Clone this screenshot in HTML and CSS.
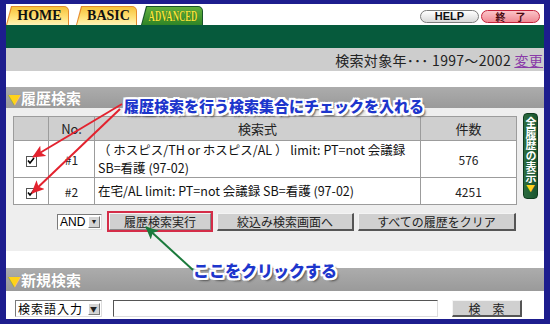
FILE: index.html
```html
<!DOCTYPE html>
<html lang="ja">
<head>
<meta charset="utf-8">
<title>履歴検索</title>
<link rel="stylesheet" href="styles.css">
</head>
<body>
<div class="frame">
  <div class="topbar">
    <div class="tabs">
      <div class="tab tab-y tab-home"><span class="tab-in">HOME</span></div>
      <div class="tab tab-y tab-basic"><span class="tab-in">BASIC</span></div>
      <div class="tab tab-g"><span class="tab-in"><span class="adv">ADVANCED</span></span></div>
    </div>
    <div class="tools">
      <span class="pill pill-help">HELP</span>
      <span class="pill pill-end">終　了</span>
    </div>
  </div>
  <div class="greenbar"></div>
  <div class="infobar">検索対象年･･･ 1997〜2002 <a class="chg">変更</a></div>

  <div class="sechead"><span class="tri">▼</span>履歴検索</div>
  <div class="panel">
    <div class="panel-top">
      <table class="hist">
        <colgroup><col class="c1"><col class="c2"><col class="c3"><col class="c4"></colgroup>
        <tr class="hrow"><th></th><th>No.</th><th>検索式</th><th>件数</th></tr>
        <tr class="r1">
          <td class="cc"><span class="cb"><svg width="8" height="8" viewBox="0 0 8 8"><path d="M1 3.5 L3 6 L7 1" fill="none" stroke="#000" stroke-width="1.6"/></svg></span></td>
          <td class="cc">#1</td>
          <td class="q">（ ホスピス/TH or ホスピス/AL ） limit: PT=not 会議録<br>SB=看護 (97-02)</td>
          <td class="cc">576</td>
        </tr>
        <tr class="r2">
          <td class="cc"><span class="cb"><svg width="8" height="8" viewBox="0 0 8 8"><path d="M1 3.5 L3 6 L7 1" fill="none" stroke="#000" stroke-width="1.6"/></svg></span></td>
          <td class="cc">#2</td>
          <td class="q">在宅/AL limit: PT=not 会議録 SB=看護 (97-02)</td>
          <td class="cc">4251</td>
        </tr>
      </table>
      <div class="allhist"><span class="vt">全履歴の表示</span><span class="vtri">▼</span></div>
    </div>
    <div class="btnrow">
      <span class="sel sel-and"><span class="sel-val">AND</span><span class="sel-arr">▼</span></span>
      <span class="hl"><span class="btn btn-run">履歴検索実行</span></span>
      <span class="btn btn-narrow">絞込み検索画面へ</span>
      <span class="btn btn-clear">すべての履歴をクリア</span>
    </div>
  </div>

  <div class="sechead sechead2"><span class="tri">▼</span>新規検索</div>
  <div class="newrow">
    <span class="sel sel-term"><span class="sel-val">検索語入力</span><span class="sel-arr">▼</span></span>
    <span class="textbox"></span>
    <span class="btn btn-search">検　索</span>
  </div>
</div>

<svg class="arrows" width="550" height="324" viewBox="0 0 550 324">
  <defs>
    <marker id="hr" markerUnits="userSpaceOnUse" markerWidth="14" markerHeight="12" refX="12" refY="6" orient="auto">
      <path d="M0 0 L13 6 L0 12 L3 6 Z" fill="#e3222e"/>
    </marker>
    <marker id="hg" markerUnits="userSpaceOnUse" markerWidth="14" markerHeight="12" refX="12" refY="6" orient="auto">
      <path d="M0 0 L13 6 L0 12 L3 6 Z" fill="#1b7a3c"/>
    </marker>
  </defs>
  <line x1="122" y1="104" x2="33" y2="157" stroke="#e3222e" stroke-width="2" marker-end="url(#hr)"/>
  <line x1="120" y1="109" x2="32" y2="193" stroke="#e3222e" stroke-width="2" marker-end="url(#hr)"/>
  <line x1="193" y1="270" x2="146" y2="227" stroke="#1b7a3c" stroke-width="2" marker-end="url(#hg)"/>
</svg>
<div class="callout callout-1">履歴検索を行う検索集合にチェックを入れる</div>
<div class="callout callout-2">ここをクリックする</div>
</body>
</html>
```
FILE: styles.css
```css
html, body {
  margin: 0;
  padding: 0;
}
body {
  width: 550px;
  height: 324px;
  background: #1d1d8e;
  position: relative;
  overflow: hidden;
  font-family: "Noto Sans CJK JP", "Noto Sans", sans-serif;
  color: #000;
}
.frame {
  margin: 4px 6px 0 6px;
  height: 315px;
  background: #fff;
  display: flex;
  flex-direction: column;
}
/* top bar */
.topbar {
  height: 21px;
  display: flex;
  justify-content: space-between;
}
.tabs {
  display: flex;
  align-items: flex-end;
  gap: 7px;
}
.tab {
  height: 19px;
  padding: 1px 1px 0 1px;
  box-sizing: border-box;
  clip-path: polygon(5px 0, 100% 0, 100% 100%, 0 100%);
  border-radius: 4px 5px 0 0;
  display: flex;
}
.tab-home { width: 63px; }
.tab-basic { width: 61px; }
.tab-g { width: 62px; margin-left: -3px; background: #17542a; }
.tab-y { background: #e58a2c; }
.tab-in {
  flex: 1;
  display: flex;
  align-items: center;
  justify-content: center;
  clip-path: polygon(5px 0, 100% 0, 100% 100%, 0 100%);
  border-radius: 3px 4px 0 0;
  padding-left: 4px;
  overflow: hidden;
}
.tab-y .tab-in {
  background: linear-gradient(#f7c23a, #ffe27a 60%, #fff3b8);
  font-family: "Liberation Serif", serif;
  font-weight: bold;
  font-size: 14px;
  color: #111;
}
.tab-g .tab-in {
  background: linear-gradient(#62b03e, #2f8526);
  padding-left: 2px;
}
.adv {
  font-family: "Liberation Serif", serif;
  font-weight: bold;
  font-size: 15px;
  line-height: 15px;
  color: #f4e43c;
  text-shadow: 0 0 1px #1a4a10;
  transform: scaleX(0.58);
  display: inline-block;
  margin: 0 -25px;
  flex: none;
}
.tools {
  display: flex;
  gap: 2px;
  margin-top: 6px;
  padding-right: 4px;
  height: 13px;
}
.pill {
  width: 59px;
  height: 13px;
  box-sizing: border-box;
  border-radius: 7px;
  display: flex;
  align-items: center;
  justify-content: center;
  font-size: 11px;
  font-weight: bold;
  line-height: 1;
}
.pill-help {
  border: 1px solid #7c7c7c;
  background: linear-gradient(#ffffff, #d8d8d8);
  font-family: "Liberation Sans", sans-serif;
  color: #111;
}
.pill-end {
  border: 1px solid #c4223a;
  background: linear-gradient(#fbc4c8, #f08a94);
  color: #4a0a10;
  font-size: 10px;
}
.greenbar {
  height: 23px;
  background: #065a3c;
}
.infobar {
  height: 23px;
  background: #cdcdcd;
  display: flex;
  align-items: center;
  justify-content: flex-end;
  padding-right: 1px;
  font-size: 14px;
  letter-spacing: 0.3px;
  color: #222;
  white-space: pre;
}
.chg {
  color: #8a3aa8;
  text-decoration: underline;
}
/* section headers */
.sechead {
  margin-top: 16px;
  height: 21px;
  background: linear-gradient(#acacac, #9a9a9a);
  color: #fff;
  font-weight: bold;
  font-size: 15px;
  line-height: 21px;
  padding-left: 2px;
  text-shadow: 0 0 1px #888;
}
.tri {
  color: #ffd21a;
  font-size: 13px;
}
.sechead2 {
  margin-top: 17px;
  height: 23px;
  line-height: 23px;
}
/* panel */
.panel {
  background: #eeeeee;
  height: 143px;
  box-sizing: border-box;
  padding: 5px 0 0 7px;
}
.panel-top {
  display: flex;
  align-items: flex-start;
  gap: 6px;
}
.hist {
  margin-top: 3px;
  border-collapse: collapse;
  table-layout: fixed;
  width: 503px;
  font-size: 12.5px;
  background: #fff;
}
.c1 { width: 35px; }
.c2 { width: 46px; }
.c3 { width: 326px; }
.c4 { width: 96px; }
.hist th, .hist td {
  border: 1px solid #9c9c9c;
  padding: 0;
}
.hist th {
  background: #cfcfcf;
  font-weight: normal;
  font-size: 13px;
  color: #222;
  height: 23px;
}
.r1 td { height: 36px; }
.r2 td { height: 26px; }
.cc { text-align: center; color: #222; font-size: 12px; }
.q {
  padding: 0 0 0 3px !important;
  line-height: 18px;
  color: #111;
  white-space: nowrap;
}
.cb {
  display: inline-flex;
  align-items: center;
  justify-content: center;
  width: 9px;
  height: 9px;
  border: 1px solid #555;
  background: #fff;
  vertical-align: middle;
}
.allhist {
  width: 15px;
  height: 86px;
  box-sizing: border-box;
  border-radius: 4px;
  background: linear-gradient(90deg, #2b6b3e, #1a5530);
  border: 1px solid #0f3a1e;
  display: flex;
  flex-direction: column;
  align-items: center;
  padding-top: 3px;
}
.vt {
  writing-mode: vertical-rl;
  text-orientation: upright;
  font-size: 11px;
  font-weight: bold;
  color: #fff;
  line-height: 13px;
}
.vtri {
  color: #ffd21a;
  font-size: 9px;
  line-height: 10px;
  margin-top: 1px;
}
.btnrow {
  margin-top: 6px;
  padding-left: 44px;
  display: flex;
  align-items: center;
  gap: 4px;
  height: 21px;
}
.sel {
  display: inline-flex;
  align-items: center;
  box-sizing: border-box;
  height: 16px;
  border: 1px solid #7a7a7a;
  border-right-color: #ddd;
  border-bottom-color: #ddd;
  background: #fff;
  font-size: 12px;
  padding: 0 1px 0 2px;
  justify-content: space-between;
}
.sel-and {
  width: 45px;
  margin-right: 1px;
  font-family: "Liberation Sans", sans-serif;
}
.sel-arr {
  width: 12px;
  height: 12px;
  box-sizing: border-box;
  background: #d4d4d4;
  border: 1px solid #fff;
  border-right-color: #777;
  border-bottom-color: #777;
  font-size: 7px;
  line-height: 10px;
  text-align: center;
  color: #222;
}
.btn {
  display: inline-flex;
  align-items: center;
  justify-content: center;
  box-sizing: border-box;
  height: 18px;
  background: #d0d0d0;
  border: 1px solid #f4f4f4;
  border-right: 2px solid #555;
  border-bottom: 2px solid #555;
  font-size: 12px;
  color: #222;
}
.hl {
  display: inline-flex;
  box-sizing: border-box;
  width: 106px;
  height: 21px;
  border: 2px solid #d42d48;
}
.btn-run { flex: 1; height: 17px; border-right-width: 1px; border-bottom-width: 1px; border-right-color: #888; border-bottom-color: #888; }
.btn-narrow { width: 137px; }
.btn-clear { width: 158px; }
/* new search row */
.newrow {
  padding: 9px 0 0 9px;
  display: flex;
  align-items: center;
}
.sel-term {
  width: 87px;
  height: 17px;
  letter-spacing: 1px;
}
.textbox {
  margin-left: 11px;
  width: 325px;
  height: 17px;
  box-sizing: border-box;
  border: 1px solid #555;
  border-right-color: #ddd;
  border-bottom-color: #ddd;
  background: #fff;
}
.btn-search {
  margin-left: 14px;
  width: 70px;
  height: 17px;
}
/* overlays */
.arrows {
  position: absolute;
  left: 0;
  top: 0;
}
.callout {
  position: absolute;
  font-weight: 900;
  color: #1d36cc;
  white-space: nowrap;
  line-height: 1;
  text-shadow:
    -1px -1px 0 #fff, 1px -1px 0 #fff, -1px 1px 0 #fff, 1px 1px 0 #fff,
    -2px 0 0 #fff, 2px 0 0 #fff, 0 -2px 0 #fff, 0 2px 0 #fff,
    2px 2px 0 #fff, -2px -2px 0 #fff, 2px -2px 0 #fff, -2px 2px 0 #fff,
    3px 3px 2px #555;
}
.callout-1 {
  left: 124px;
  top: 98px;
  font-size: 15px;
}
.callout-2 {
  left: 193px;
  top: 262px;
  font-size: 16px;
}
```
